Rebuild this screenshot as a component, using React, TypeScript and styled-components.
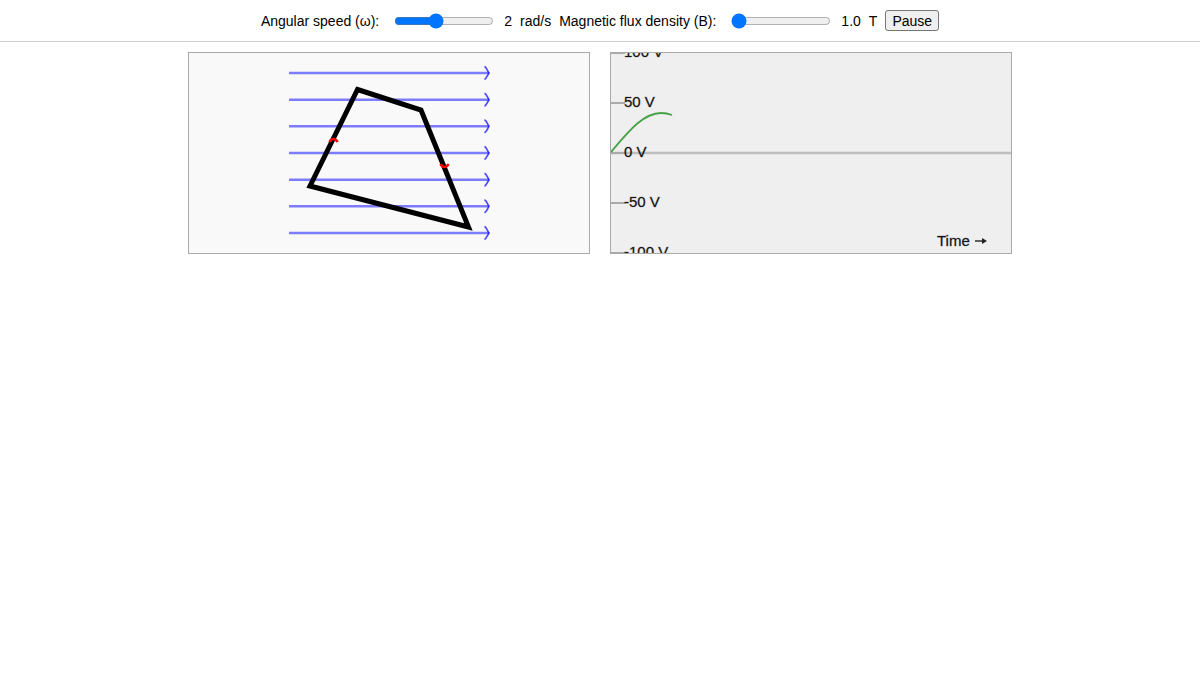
import React, { useState } from 'react';
import styled, { createGlobalStyle } from 'styled-components';

const GlobalStyle = createGlobalStyle`
  body {
    margin: 0;
    background: #fff;
    color: #000;
    font-family: "Liberation Sans", Arial, Helvetica, sans-serif;
    font-size: 14px;
    line-height: 16px;
  }
`;

const Toolbar = styled.form`
  display: flex;
  flex-wrap: wrap;
  align-items: center;
  justify-content: center;
  gap: 8px;
  padding: 10px;
  border-bottom: 1px solid #ccc;
`;

const Control = styled.div`
  display: flex;
  align-items: center;
  gap: 8px;
`;

const Slider = styled.input`
  width: 100px;
  height: 16px;
  margin: 0 2px 0 7px;
  accent-color: #0075ff;
`;

const PauseButton = styled.button`
  box-sizing: border-box;
  height: 21px;
  padding: 0 6px;
  border: 1px solid #767676;
  border-radius: 3px;
  background: #efefef;
  color: #000;
  font: inherit;
`;

const Panels = styled.main`
  display: flex;
  flex-wrap: wrap;
  justify-content: center;
  gap: 20px;
  padding: 10px;
`;

const Panel = styled.section<{ $fill: string }>`
  flex: 0 1 400px;
  border: 1px solid #aaa;
  background: ${(p) => p.$fill};
`;

const Drawing = styled.svg`
  display: block;
  width: 100%;
  height: auto;
`;

const AxisLabel = styled.text`
  font-size: 15px;
  fill: #111;
  stroke: #111;
  stroke-opacity: 0.25;
`;

const fieldLines = Array.from({ length: 7 }, (_, i) => 20 + (i * 80) / 3);
const voltages = [100, 50, 0, -50, -100];

function Coil() {
  return (
    <Drawing viewBox="0 0 400 200" role="img" aria-label="Rotating coil in a magnetic field">
      <g fill="none" stroke="#00f">
        {fieldLines.map((y) => (
          <g key={y} transform={`translate(100 ${y})`}>
            <path d="M0 0H200" strokeWidth="2.5" opacity="0.5" />
            <path d="M195.500 -6.500C197.500 -5.500 198 -3 200 0C198 3 197.500 5.500 195.500 6.500" strokeWidth="1.700" opacity="0.7" />
          </g>
        ))}
      </g>
      <path
        d="M168.500 36.500L232 57L279.500 174L121 133Z"
        fill="none"
        stroke="#000"
        strokeWidth="5"
        strokeLinejoin="miter"
      />
      <g fill="none" stroke="#f00" strokeWidth="2.600">
        <path d="M140.500 89Q142 86 144.500 86Q147 86 148.500 89" />
        <path d="M251.500 111Q253 114 255.500 114Q258 114 259.500 111" />
      </g>
    </Drawing>
  );
}

function VoltageChart() {
  return (
    <Drawing viewBox="0 0 400 200" role="img" aria-label="Induced voltage over time">
      <path d="M0 100H400" stroke="#bebebe" strokeWidth="2.400" />
      {voltages.map((v) => (
        <g key={v}>
          <path d={`M0 ${100 - v}H14`} stroke="#aaa" strokeWidth="2" />
          <AxisLabel x="13" y={104 - v}>{v} V</AxisLabel>
        </g>
      ))}
      <path
        d="M0 99C17 79 32 60 50 60Q56 60 61 62"
        fill="none"
        stroke="#008000"
        strokeOpacity="0.7"
        strokeWidth="1.800"
      />
      <AxisLabel x="326" y="193">Time</AxisLabel>
      <path d="M364 188H373" fill="none" stroke="#222" strokeWidth="1.400" />
      <path d="M371 185L376 188L371 191Z" fill="#222" />
    </Drawing>
  );
}

export default function App() {
  const [speed, setSpeed] = useState(2);
  const [flux, setFlux] = useState(1);
  const [paused, setPaused] = useState(false);

  return (
    <>
      <GlobalStyle />
      <Toolbar>
        <Control>
          <label htmlFor="speed">Angular speed (ω):</label>
          <Slider id="speed" type="range" min="0" max="5" step="0.1" value={speed} onChange={(e) => setSpeed(Number(e.target.value))} />
          <output htmlFor="speed">{speed}</output>
          <span>rad/s</span>
        </Control>
        <Control>
          <label htmlFor="flux">Magnetic flux density (B):</label>
          <Slider id="flux" type="range" min="1" max="5" step="0.1" value={flux} onChange={(e) => setFlux(Number(e.target.value))} />
          <output htmlFor="flux">{flux.toFixed(1)}</output>
          <span>T</span>
        </Control>
        <PauseButton type="button" onClick={() => setPaused(!paused)}>{paused ? 'Resume' : 'Pause'}</PauseButton>
      </Toolbar>
      <Panels>
        <Panel $fill="#f9f9f9"><Coil /></Panel>
        <Panel $fill="#efefef"><VoltageChart /></Panel>
      </Panels>
    </>
  );
}
